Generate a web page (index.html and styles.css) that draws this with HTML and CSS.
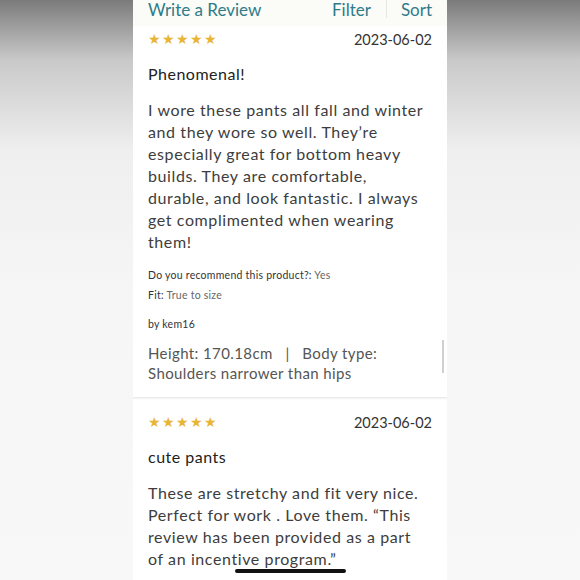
FILE: index.html
```html
<!doctype html>
<html>
  <head>
    <title>Reviews</title>
    <meta name="viewport" content="initial-scale=1, maximum-scale=1">
    <link rel="stylesheet" href="styles.css">
  </head>
  <body>
    <div class=panel>
      <div class=bar>
        <a class=write>Write a Review</a>
        <div class=tools>
          <a>Filter</a>
          <span class=sep></span>
          <a>Sort</a>
        </div>
      </div>

      <div class=review>
        <div class=top>
          <span class=stars>&#9733;&#9733;&#9733;&#9733;&#9733;</span>
          <span class=date>2023-06-02</span>
        </div>
        <h2>Phenomenal!</h2>
        <p class=text>I wore these pants all fall and winter and they wore so well. They’re especially great for bottom heavy builds. They are comfortable, durable, and look fantastic. I always get complimented when wearing them!</p>
        <p class="meta first"><b>Do you recommend this product?:</b> Yes</p>
        <p class=meta><b>Fit:</b> True to size</p>
        <p class="meta by"><b>by kem16</b></p>
        <p class=body>Height: 170.18cm &nbsp;&nbsp;|&nbsp;&nbsp; Body type: Shoulders narrower than hips</p>
        <span class=scroll></span>
      </div>

      <div class="review last">
        <div class=top>
          <span class=stars>&#9733;&#9733;&#9733;&#9733;&#9733;</span>
          <span class=date>2023-06-02</span>
        </div>
        <h2>cute pants</h2>
        <p class=text>These are stretchy and fit very nice. Perfect for work . Love them. “This review has been provided as a part of an incentive program.”</p>
      </div>
    </div>
    <div class=home></div>
  </body>
</html>
```

FILE: styles.css
```css
* {
  box-sizing: border-box;
  margin: 0;
  padding: 0;
}

html, body {
  height: 100%;
  overflow: hidden;
}

body {
  font-family: Lato, "Noto Sans", sans-serif;
  background: linear-gradient(#7b7b7b 0, #c9c9c9 60px, #efefef 150px, #f6f6f6 300px, #f8f8f8 100%);
  display: flex;
  justify-content: center;
}

.panel {
  width: 314px;
  height: 100%;
  background: #fff;
  overflow: hidden;
}

.bar {
  height: 26px;
  background: #fbfbf7;
  display: flex;
  justify-content: space-between;
  align-items: flex-start;
  padding: 0 15px;
  color: #2e7b8b;
  font-size: 17px;
  line-height: 19px;
}

.tools {
  display: flex;
}

.sep {
  width: 1px;
  height: 18px;
  background: #e6e6e2;
  margin: 0 14px 0 15px;
}

.review {
  position: relative;
  padding: 0 15px;
  border-bottom: 1px solid #ececec;
  box-shadow: 0 1px 1px #f3f3f3;
}

.review.last {
  border: none;
  box-shadow: none;
  padding-bottom: 60px;
}

.top {
  display: flex;
  justify-content: space-between;
  align-items: center;
  height: 26px;
}

.review + .review .top {
  margin-top: 11px;
}

.stars {
  color: #e8b634;
  font-size: 13.5px;
  letter-spacing: 1px;
}

.date {
  color: #333;
  font-size: 14.5px;
}

h2 {
  font-size: 16px;
  font-weight: normal;
  color: #222;
  line-height: 22px;
  margin-top: 11px;
  letter-spacing: 0.5px;
}

.text {
  font-size: 16px;
  line-height: 22px;
  color: #3d3d3d;
  margin-top: 14px;
  padding-right: 5px;
  letter-spacing: 0.6px;
}

.meta {
  font-size: 10.5px;
  line-height: 14px;
  color: #666;
  margin-top: 6px;
  letter-spacing: 0.25px;
}

.meta.first {
  margin-top: 15px;
}

.meta b {
  font-weight: normal;
  color: #333;
}

.by {
  margin-top: 15px;
}

.body {
  font-size: 15px;
  line-height: 20px;
  color: #555;
  margin-top: 12px;
  padding-bottom: 14px;
  letter-spacing: 0.4px;
}

.scroll {
  position: absolute;
  right: 3px;
  top: 314px;
  width: 2px;
  height: 33px;
  background: #d0d0d0;
}

.home {
  position: fixed;
  left: 235px;
  top: 569px;
  width: 111px;
  height: 4px;
  border-radius: 2px;
  background: #111;
}
```
